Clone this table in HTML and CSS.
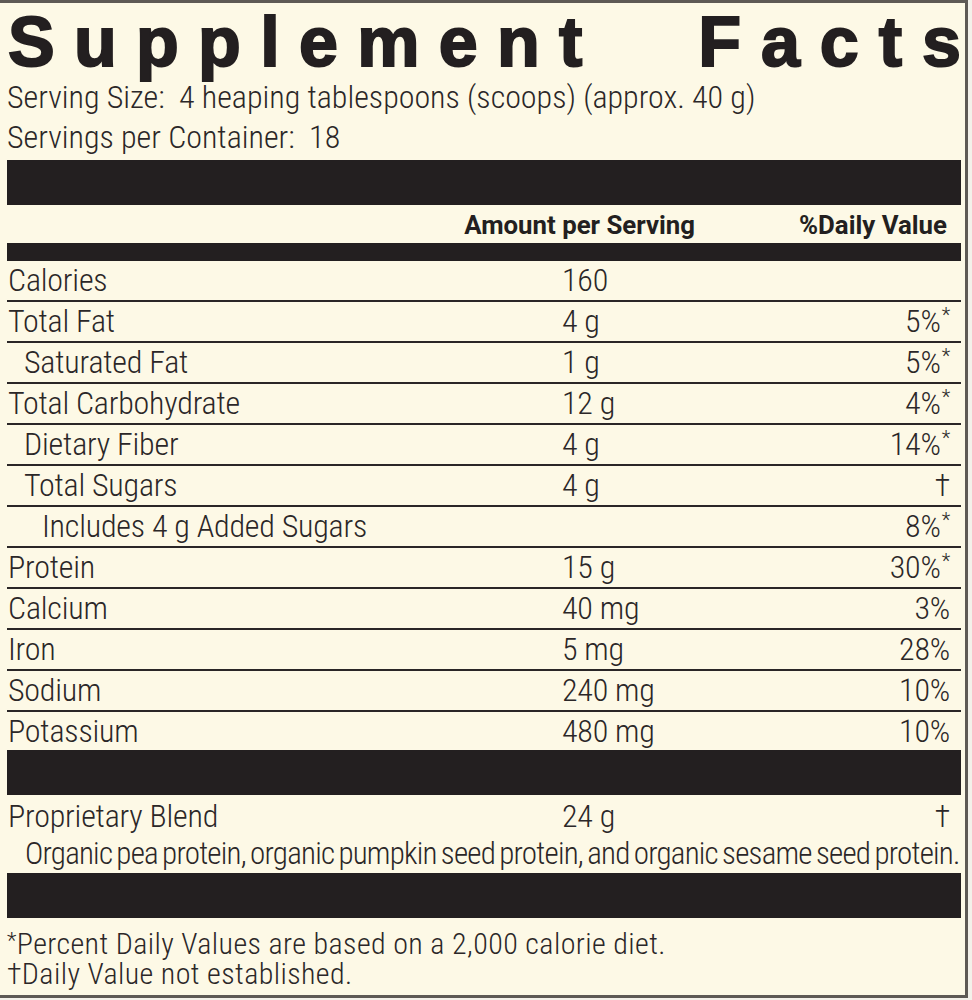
FILE: index.html
```html
<!DOCTYPE html>
<html lang="en">
<head>
<meta charset="utf-8">
<title>Supplement Facts</title>
<link rel="stylesheet" href="styles.css">
</head>
<body>
<div class="label">
  <h1 class="title"><span class="word w1">Supplement</span><span class="word w2">Fact<span class="endch">s</span></span></h1>
  <div class="serving">Serving Size:&nbsp; 4 heaping tablespoons (scoops) (approx. 40 g)</div>
  <div class="serving">Servings per Container:&nbsp; 18</div>
  <div class="bar bar-lg top-bar"></div>
  <div class="head"><span class="head-amt">Amount per Serving</span><span class="head-dv">%Daily Value</span></div>
  <div class="bar bar-sm"></div>

  <div class="row"><span class="name">Calories</span><span class="amt">160</span><span class="dv"></span></div>
  <div class="row"><span class="name">Total Fat</span><span class="amt">4 g</span><span class="dv">5%<sup>*</sup></span></div>
  <div class="row"><span class="name ind1">Saturated Fat</span><span class="amt">1 g</span><span class="dv">5%<sup>*</sup></span></div>
  <div class="row"><span class="name">Total Carbohydrate</span><span class="amt">12 g</span><span class="dv">4%<sup>*</sup></span></div>
  <div class="row"><span class="name ind1">Dietary Fiber</span><span class="amt">4 g</span><span class="dv">14%<sup>*</sup></span></div>
  <div class="row"><span class="name ind1">Total Sugars</span><span class="amt">4 g</span><span class="dv">†</span></div>
  <div class="row"><span class="name ind2">Includes 4 g Added Sugars</span><span class="amt"></span><span class="dv">8%<sup>*</sup></span></div>
  <div class="row"><span class="name">Protein</span><span class="amt">15 g</span><span class="dv">30%<sup>*</sup></span></div>
  <div class="row"><span class="name">Calcium</span><span class="amt">40 mg</span><span class="dv">3%</span></div>
  <div class="row"><span class="name">Iron</span><span class="amt">5 mg</span><span class="dv">28%</span></div>
  <div class="row"><span class="name">Sodium</span><span class="amt">240 mg</span><span class="dv">10%</span></div>
  <div class="row row-last"><span class="name">Potassium</span><span class="amt">480 mg</span><span class="dv">10%</span></div>

  <div class="bar bar-lg"></div>
  <div class="row blend"><span class="name">Proprietary Blend</span><span class="amt">24 g</span><span class="dv">†</span></div>
  <div class="ingredients">Organic pea protein, organic pumpkin seed protein, and organic sesame seed protein.</div>
  <div class="bar bar-lg"></div>
  <div class="foot">
    <p class="foot-line"><sup class="fstar">*</sup>Percent Daily Values are based on a 2,000 calorie diet.</p>
    <p class="foot-line">†Daily Value not established.</p>
  </div>
</div>
</body>
</html>
```
FILE: styles.css
```css
html, body {
  margin: 0;
  padding: 0;
  background: #f3f1ea;
}

.label {
  width: 954px;
  padding: 0 4px 6px 7px;
  background: #fdf9e6;
  border-top: 3px solid #5e5a55;
  border-right: 3px solid #5e5a55;
  border-bottom: 3px solid #5e5a55;
  color: #2b2728;
  font-family: "Roboto", "Liberation Sans", sans-serif;
  font-stretch: 75%;
  font-weight: 300;
  font-size: 32px;
}

.title {
  margin: 0;
  padding-top: 4px;
  height: 70px;
  line-height: 70px;
  display: flex;
  justify-content: space-between;
  font-family: "Liberation Sans", "Arial", sans-serif;
  font-stretch: 100%;
  font-weight: bold;
  font-size: 70px;
  color: #231f20;
  -webkit-text-stroke: 2px #231f20;
}

.title .word { display: block; }
.title .w1 { padding-left: 1px; letter-spacing: 19.3px; }
.title .w2 { letter-spacing: 20px; }
.title .endch { letter-spacing: 0; }

.serving {
  height: 40px;
  line-height: 40px;
  white-space: nowrap;
  letter-spacing: 0;
}

.bar { background: #231f20; }
.bar-lg { height: 45px; }
.top-bar { margin-top: 3px; }
.bar-sm { height: 18px; }

.head {
  height: 38px;
  line-height: 38px;
  display: flex;
  justify-content: flex-end;
  align-items: baseline;
  font-weight: bold;
  font-size: 25.8px;
  font-stretch: 90%;
  padding-top: 1px;
  box-sizing: border-box;
  color: #231f20;
}
.head-amt { margin-right: 104px; }
.head-dv { padding-right: 14px; }

.row {
  display: grid;
  grid-template-columns: 554px 1fr auto;
  height: 41px;
  line-height: 39px;
  border-bottom: 2px solid #2a2627;
  box-sizing: border-box;
  white-space: nowrap;
  letter-spacing: -0.2px;
}
.row-last { border-bottom: 0; height: 38px; }

.name { padding-left: 1px; }
.ind1 { padding-left: 17px; }
.ind2 { padding-left: 35px; }
.amt { padding-left: 1px; }
.dv { padding-right: 11px; text-align: right; }

sup {
  font-size: 20px;
  line-height: 0;
  vertical-align: 10px;
  margin-left: 1px;
}

.blend {
  border-bottom: 0;
  height: 40px;
  padding-top: 3px;
  line-height: 37px;
}

.ingredients {
  height: 38px;
  line-height: 38px;
  padding-left: 18px;
  white-space: nowrap;
  font-size: 31px;
  letter-spacing: -0.78px;
  word-spacing: -2px;
}

.foot {
  padding-top: 11px;
}
.foot-line {
  margin: 0;
  height: 30px;
  line-height: 30px;
  white-space: nowrap;
  font-size: 30px;
  letter-spacing: 0.4px;
}
.fstar { font-size: 22px; vertical-align: 6px; margin: 0; }
```
